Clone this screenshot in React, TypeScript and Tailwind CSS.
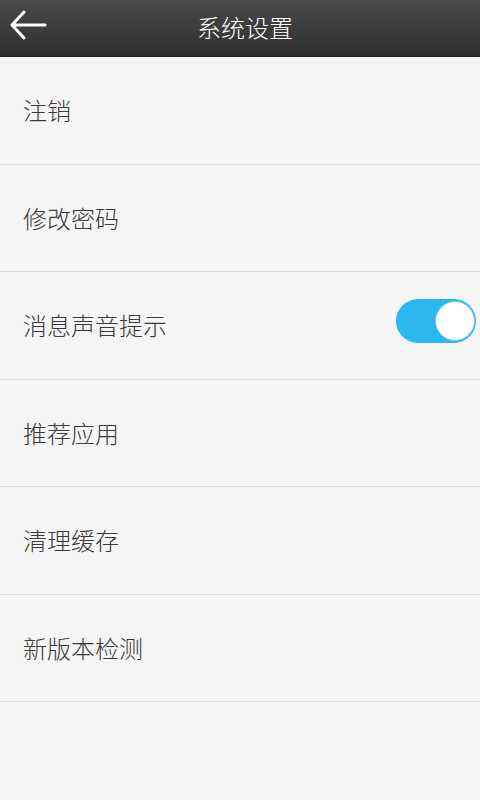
import { useState } from "react"

const items = ["注销", "修改密码", "消息声音提示", "推荐应用", "清理缓存", "新版本检测"]

const Toggle = ({ on, onChange }: { on: boolean; onChange: () => void }) => (
	<button
		onClick={onChange}
		className={`relative mb-[8px] w-[80px] h-[44px] rounded-full ${on ? "bg-[#2bb8f0]" : "bg-[#d8d8d8]"}`}
	>
		<span
			className={`absolute top-[2px] w-[40px] h-[40px] rounded-full bg-white border border-[#7cc7e6] ${
				on ? "right-[1px]" : "left-[1px]"
			}`}
		></span>
	</button>
)

const App = () => {
	const [sound, setSound] = useState(true)

	return (
		<div
			className="w-[480px] h-[800px] bg-[#f5f5f5] flex flex-col"
			style={{ fontFamily: '"Noto Sans CJK SC", "Noto Sans", sans-serif' }}
		>
			{/* header */}
			<div className="relative h-[57px] flex items-center justify-center bg-gradient-to-b from-[#4a4a4a] to-[#2f2f2f] border-b border-[#222]">
				<svg
					className="absolute left-[9px] top-[10px]"
					width="40"
					height="34"
					viewBox="0 0 40 34"
					fill="none"
					stroke="white"
					strokeWidth="3"
					strokeLinecap="round"
					strokeLinejoin="round"
				>
					<path d="M36 15H3M15 2L3 15l12 13" />
				</svg>
				<h1 className="pl-[10px] mb-[3px] text-[24px] leading-none text-white font-light">系统设置</h1>
			</div>

			{/* list */}
			<ul>
				{items.map((label, i) => (
					<li
						key={i}
						className="h-[107.5px] flex items-center justify-between pl-[23px] pr-[4px] border-b border-[#dcdcdc]"
					>
						<span className="text-[24px] leading-none text-[#3a3a3a] font-light">{label}</span>
						{i === 2 && <Toggle on={sound} onChange={() => setSound(!sound)} />}
					</li>
				))}
			</ul>
		</div>
	)
}

export default App
